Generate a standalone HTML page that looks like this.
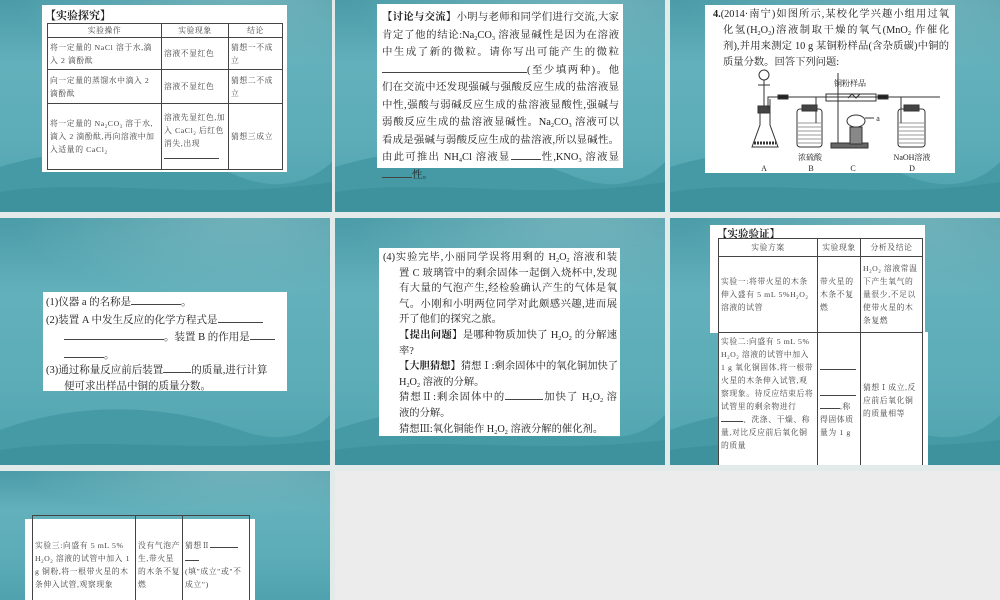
<!DOCTYPE html>
<html><head><meta charset="utf-8">
<style>
*{margin:0;padding:0;box-sizing:border-box}
body{width:1000px;height:600px;position:relative;overflow:hidden;background:#e3eaea;font-family:"Liberation Serif","Noto Serif CJK SC",serif;color:#222}
.t{position:absolute;overflow:hidden;background:linear-gradient(180deg,#4a9ca8 0%,#62b0bb 30%,#5cadb8 65%,#4fa2ad 100%)}
.t:before{content:"";position:absolute;left:-10%;top:-30%;width:120%;height:70%;background:radial-gradient(ellipse at 70% 40%,rgba(255,255,255,.22),rgba(255,255,255,0) 60%)}
.t svg.w{position:absolute;left:0;bottom:0}
.c{position:absolute;background:#fff}
.l{white-space:nowrap;overflow:hidden;text-align:justify;text-align-last:justify;height:17.5px;line-height:17.5px}
.ll{white-space:nowrap;overflow:hidden;height:17.5px;line-height:17.5px}
table{border-collapse:collapse;position:absolute;table-layout:fixed}
td{border:1px solid #444;font-size:7.8px;line-height:13px;color:#444;vertical-align:middle;padding:0 2px;letter-spacing:.6px;overflow:hidden}
.u{display:inline-block;border-bottom:1px solid #444;height:9px;vertical-align:baseline}
sub{font-size:60%;vertical-align:-2px;line-height:0}
</style></head><body>

<div class="t" style="left:0;top:0;width:332px;height:212px">
<svg class="w" width="332" height="90" viewBox="0 0 332 90"><path d="M0 45 C80 20 170 25 240 55 C280 70 310 60 332 40 L332 90 L0 90Z" fill="#469aa6"/><path d="M0 70 C100 55 200 80 332 60 L332 90 L0 90Z" fill="#3e929e"/></svg>
<div class="c" style="left:42px;top:5px;width:245px;height:167px">
<div style="position:absolute;left:3px;top:2px;font-size:11px;font-weight:bold">【实验探究】</div>
<table style="left:5px;top:18px;width:236px;height:147px">
<colgroup><col style="width:114px"><col style="width:67px"><col></colgroup>
<tr style="height:14px"><td style="text-align:center">实验操作</td><td style="text-align:center">实验现象</td><td style="text-align:center">结论</td></tr>
<tr style="height:32px"><td>将一定量的 NaCl 溶于水,滴入 2 滴酚酞</td><td>溶液不显红色</td><td>猜想一不成立</td></tr>
<tr style="height:34px"><td>向一定量的蒸馏水中滴入 2 滴酚酞</td><td>溶液不显红色</td><td>猜想二不成立</td></tr>
<tr><td>将一定量的 Na<sub>2</sub>CO<sub>3</sub> 溶于水,滴入 2 滴酚酞,再向溶液中加入适量的 CaCl<sub>2</sub></td><td>溶液先显红色,加入 CaCl<sub>2</sub> 后红色消失,出现<br><span class="u" style="width:55px"></span></td><td>猜想三成立</td></tr>
</table></div></div>

<div class="t" style="left:335px;top:0;width:330px;height:212px">
<svg class="w" width="330" height="90" viewBox="0 0 330 90"><path d="M0 45 C80 20 170 25 240 55 C280 70 310 60 330 40 L330 90 L0 90Z" fill="#469aa6"/><path d="M0 70 C100 55 200 80 330 60 L330 90 L0 90Z" fill="#3e929e"/></svg>
<div class="c" style="left:42px;top:4px;width:246px;height:164px;padding:5px 4px 0 5px;font-size:10.4px">
<div class="l"><b>【讨论与交流】</b>小明与老师和同学们进行交流,大家</div>
<div class="l">肯定了他的结论:Na<sub>2</sub>CO<sub>3</sub> 溶液显碱性是因为在溶液</div>
<div class="l">中生成了新的微粒。请你写出可能产生的微粒</div>
<div class="l"><span class="u" style="width:145px"></span>(至少填两种)。他</div>
<div class="l">们在交流中还发现强碱与强酸反应生成的盐溶液显</div>
<div class="l">中性,强酸与弱碱反应生成的盐溶液显酸性,强碱与</div>
<div class="l">弱酸反应生成的盐溶液显碱性。Na<sub>2</sub>CO<sub>3</sub> 溶液可以</div>
<div class="l">看成是强碱与弱酸反应生成的盐溶液,所以显碱性。</div>
<div class="l">由此可推出 NH<sub>4</sub>Cl 溶液显<span class="u" style="width:30px"></span>性,KNO<sub>3</sub> 溶液显</div>
<div class="ll"><span class="u" style="width:30px"></span>性。</div>
</div></div>

<div class="t" style="left:670px;top:0;width:330px;height:212px">
<svg class="w" width="330" height="90" viewBox="0 0 330 90"><path d="M0 45 C80 20 170 25 240 55 C280 70 310 60 330 40 L330 90 L0 90Z" fill="#469aa6"/><path d="M0 70 C100 55 200 80 330 60 L330 90 L0 90Z" fill="#3e929e"/></svg>
<div class="c" style="left:35px;top:5px;width:250px;height:168px;padding:2px 6px 0 8px;font-size:10.3px">
<div class="l" style="height:16px;line-height:16px"><b>4.</b>(2014·南宁)如图所示,某校化学兴趣小组用过氧</div>
<div class="l" style="height:16px;line-height:16px;padding-left:10px">化氢(H<sub>2</sub>O<sub>2</sub>)溶液制取干燥的氧气(MnO<sub>2</sub> 作催化</div>
<div class="l" style="height:16px;line-height:16px;padding-left:10px">剂),并用来测定 10 g 某铜粉样品(含杂质碳)中铜的</div>
<div class="ll" style="height:16px;line-height:16px;padding-left:10px">质量分数。回答下列问题:</div>
</div>
<svg style="position:absolute;left:30px;top:65px" width="240" height="110" viewBox="0 0 240 110" fill="none" stroke="#333" stroke-width="1">
<circle cx="64" cy="10" r="5"/><line x1="64" y1="15" x2="64" y2="46"/><line x1="58" y1="20" x2="70" y2="20"/>
<rect x="58" y="41" width="12" height="7" fill="#444"/>
<path d="M60 48 L60 60 L52 82 L78 82 L70 60 L70 48"/><path d="M54 78 L76 78" stroke-dasharray="2 1" stroke-width="3"/>
<path d="M68 44 L68 32 L240 32" /><path d="M70 44 L70 34"/>
<rect x="78" y="30" width="10" height="4" fill="#222"/><rect x="178" y="30" width="10" height="4" fill="#222"/>
<path d="M116 32 L116 58 M201 32 L201 58"/>
<rect x="97" y="44" width="25" height="38" rx="3"/><rect x="102" y="40" width="15" height="6" fill="#444"/>
<path d="M98 58 H121 M98 62 H121 M98 66 H121 M98 70 H121 M98 74 H121 M98 78 H121" stroke-width=".6"/>
<line x1="138" y1="8" x2="138" y2="80"/><rect x="131" y="78" width="37" height="5" fill="#666"/>
<rect x="126" y="29" width="50" height="7"/><path d="M148 33 l4 -4 l4 4 l4 -4" />
<ellipse cx="156" cy="56" rx="9" ry="6"/><rect x="150" y="62" width="12" height="17" fill="#888"/>
<line x1="165" y1="53" x2="174" y2="53"/>
<rect x="198" y="44" width="27" height="38" rx="3"/><rect x="204" y="40" width="15" height="6" fill="#444"/>
<path d="M199 58 H224 M199 62 H224 M199 66 H224 M199 70 H224 M199 74 H224 M199 78 H224" stroke-width=".6"/>
<g fill="#222" stroke="none" font-size="8" font-family="Liberation Serif,Noto Serif CJK SC,serif" text-anchor="middle">
<text x="150" y="21">铜粉样品</text><text x="178" y="56">a</text>
<text x="110" y="95">浓硫酸</text><text x="212" y="95">NaOH溶液</text>
<text x="64" y="106">A</text><text x="111" y="106">B</text><text x="153" y="106">C</text><text x="212" y="106">D</text></g>
</svg></div>

<div class="t" style="left:0;top:218px;width:330px;height:247px">
<svg class="w" width="330" height="90" viewBox="0 0 330 90"><path d="M0 55 C80 25 170 30 240 55 C280 70 310 60 330 40 L330 90 L0 90Z" fill="#469aa6"/><path d="M0 75 C100 60 200 80 330 65 L330 90 L0 90Z" fill="#3e929e"/></svg>
<div class="c" style="left:43px;top:74px;width:244px;height:99px;padding:2px 0 0 3px;font-size:10.5px">
<div class="ll">(1)仪器 a 的名称是<span class="u" style="width:50px"></span>。</div>
<div class="ll">(2)装置 A 中发生反应的化学方程式是<span class="u" style="width:45px"></span></div>
<div class="ll" style="padding-left:18px"><span class="u" style="width:100px"></span>。装置 B 的作用是<span class="u" style="width:25px"></span></div>
<div class="ll" style="padding-left:18px;height:15px"><span class="u" style="width:40px"></span>。</div>
<div class="ll" style="height:16px">(3)通过称量反应前后装置<span class="u" style="width:28px"></span>的质量,进行计算</div>
<div class="ll" style="padding-left:18px;height:16px">便可求出样品中铜的质量分数。</div>
</div></div>

<div class="t" style="left:335px;top:218px;width:330px;height:247px">
<svg class="w" width="330" height="90" viewBox="0 0 330 90"><path d="M0 55 C80 25 170 30 240 55 C280 70 310 60 330 40 L330 90 L0 90Z" fill="#469aa6"/><path d="M0 75 C100 60 200 80 330 65 L330 90 L0 90Z" fill="#3e929e"/></svg>
<div class="c" style="left:44px;top:30px;width:241px;height:188px;padding:2px 3px 0 4px;font-size:10.3px">
<div class="l" style="height:15.6px;line-height:15.6px">(4)实验完毕,小丽同学误将用剩的 H<sub>2</sub>O<sub>2</sub> 溶液和装</div>
<div class="l" style="height:15.6px;line-height:15.6px;padding-left:16px">置 C 玻璃管中的剩余固体一起倒入烧杯中,发现</div>
<div class="l" style="height:15.6px;line-height:15.6px;padding-left:16px">有大量的气泡产生,经检验确认产生的气体是氧</div>
<div class="l" style="height:15.6px;line-height:15.6px;padding-left:16px">气。小刚和小明两位同学对此颇感兴趣,进而展</div>
<div class="ll" style="height:15.6px;line-height:15.6px;padding-left:16px">开了他们的探究之旅。</div>
<div class="l" style="height:15.6px;line-height:15.6px;padding-left:16px"><b>【提出问题】</b>是哪种物质加快了 H<sub>2</sub>O<sub>2</sub> 的分解速</div>
<div class="ll" style="height:15.6px;line-height:15.6px;padding-left:16px">率?</div>
<div class="l" style="height:15.6px;line-height:15.6px;padding-left:16px"><b>【大胆猜想】</b>猜想Ⅰ:剩余固体中的氧化铜加快了</div>
<div class="ll" style="height:15.6px;line-height:15.6px;padding-left:16px">H<sub>2</sub>O<sub>2</sub> 溶液的分解。</div>
<div class="l" style="height:15.6px;line-height:15.6px;padding-left:16px">猜想Ⅱ:剩余固体中的<span class="u" style="width:38px"></span>加快了 H<sub>2</sub>O<sub>2</sub> 溶</div>
<div class="ll" style="height:15.6px;line-height:15.6px;padding-left:16px">液的分解。</div>
<div class="ll" style="height:15.6px;line-height:15.6px;padding-left:16px">猜想Ⅲ:氧化铜能作 H<sub>2</sub>O<sub>2</sub> 溶液分解的催化剂。</div>
</div></div>

<div class="t" style="left:670px;top:218px;width:330px;height:247px">
<svg class="w" width="330" height="90" viewBox="0 0 330 90"><path d="M0 55 C80 25 170 30 240 55 C280 70 310 60 330 40 L330 90 L0 90Z" fill="#469aa6"/><path d="M0 75 C100 60 200 80 330 65 L330 90 L0 90Z" fill="#3e929e"/></svg>
<div class="c" style="left:40px;top:7px;width:215px;height:108px"></div>
<div class="c" style="left:48px;top:114px;width:210px;height:133px"></div>
<div style="position:absolute;left:47px;top:8px;font-size:10.5px;font-weight:bold">【实验验证】</div>
<table style="left:48px;top:20px;width:205px;height:230px">
<colgroup><col style="width:99px"><col style="width:43px"><col></colgroup>
<tr style="height:18px"><td style="text-align:center">实验方案</td><td style="text-align:center">实验现象</td><td style="text-align:center">分析及结论</td></tr>
<tr style="height:76px"><td>实验一:将带火星的木条伸入盛有 5 mL 5%H<sub>2</sub>O<sub>2</sub> 溶液的试管</td><td>带火星的木条不复燃</td><td>H<sub>2</sub>O<sub>2</sub> 溶液常温下产生氧气的量很少,不足以使带火星的木条复燃</td></tr>
<tr><td style="vertical-align:top;padding-top:2px">实验二:向盛有 5 mL 5% H<sub>2</sub>O<sub>2</sub> 溶液的试管中加入 1 g 氧化铜固体,将一根带火星的木条伸入试管,观察现象。待反应结束后将试管里的剩余物进行<span class="u" style="width:22px"></span>、洗涤、干燥、称量,对比反应前后氧化铜的质量</td><td><span class="u" style="width:36px"></span><br><br><span class="u" style="width:36px"></span><br><span class="u" style="width:20px"></span>,称得固体质量为 1 g</td><td>猜想Ⅰ成立,反应前后氧化铜的质量相等</td></tr>
</table></div>

<div class="t" style="left:0;top:471px;width:330px;height:129px">
<div class="c" style="left:25px;top:48px;width:230px;height:90px"></div>
<table style="left:32px;top:44px;width:218px;height:100px">
<colgroup><col style="width:103px"><col style="width:47px"><col></colgroup>
<tr><td>实验三:向盛有 5 mL 5% H<sub>2</sub>O<sub>2</sub> 溶液的试管中加入 1 g 铜粉,将一根带火星的木条伸入试管,观察现象</td><td>没有气泡产生,带火星的木条不复燃</td><td>猜想Ⅱ<span class="u" style="width:28px"></span><br><span class="u" style="width:14px"></span><br>(填"成立"或"不成立")</td></tr>
</table></div>

<div style="position:absolute;left:335px;top:471px;width:665px;height:129px;background:#ececec"></div>
</body></html>
